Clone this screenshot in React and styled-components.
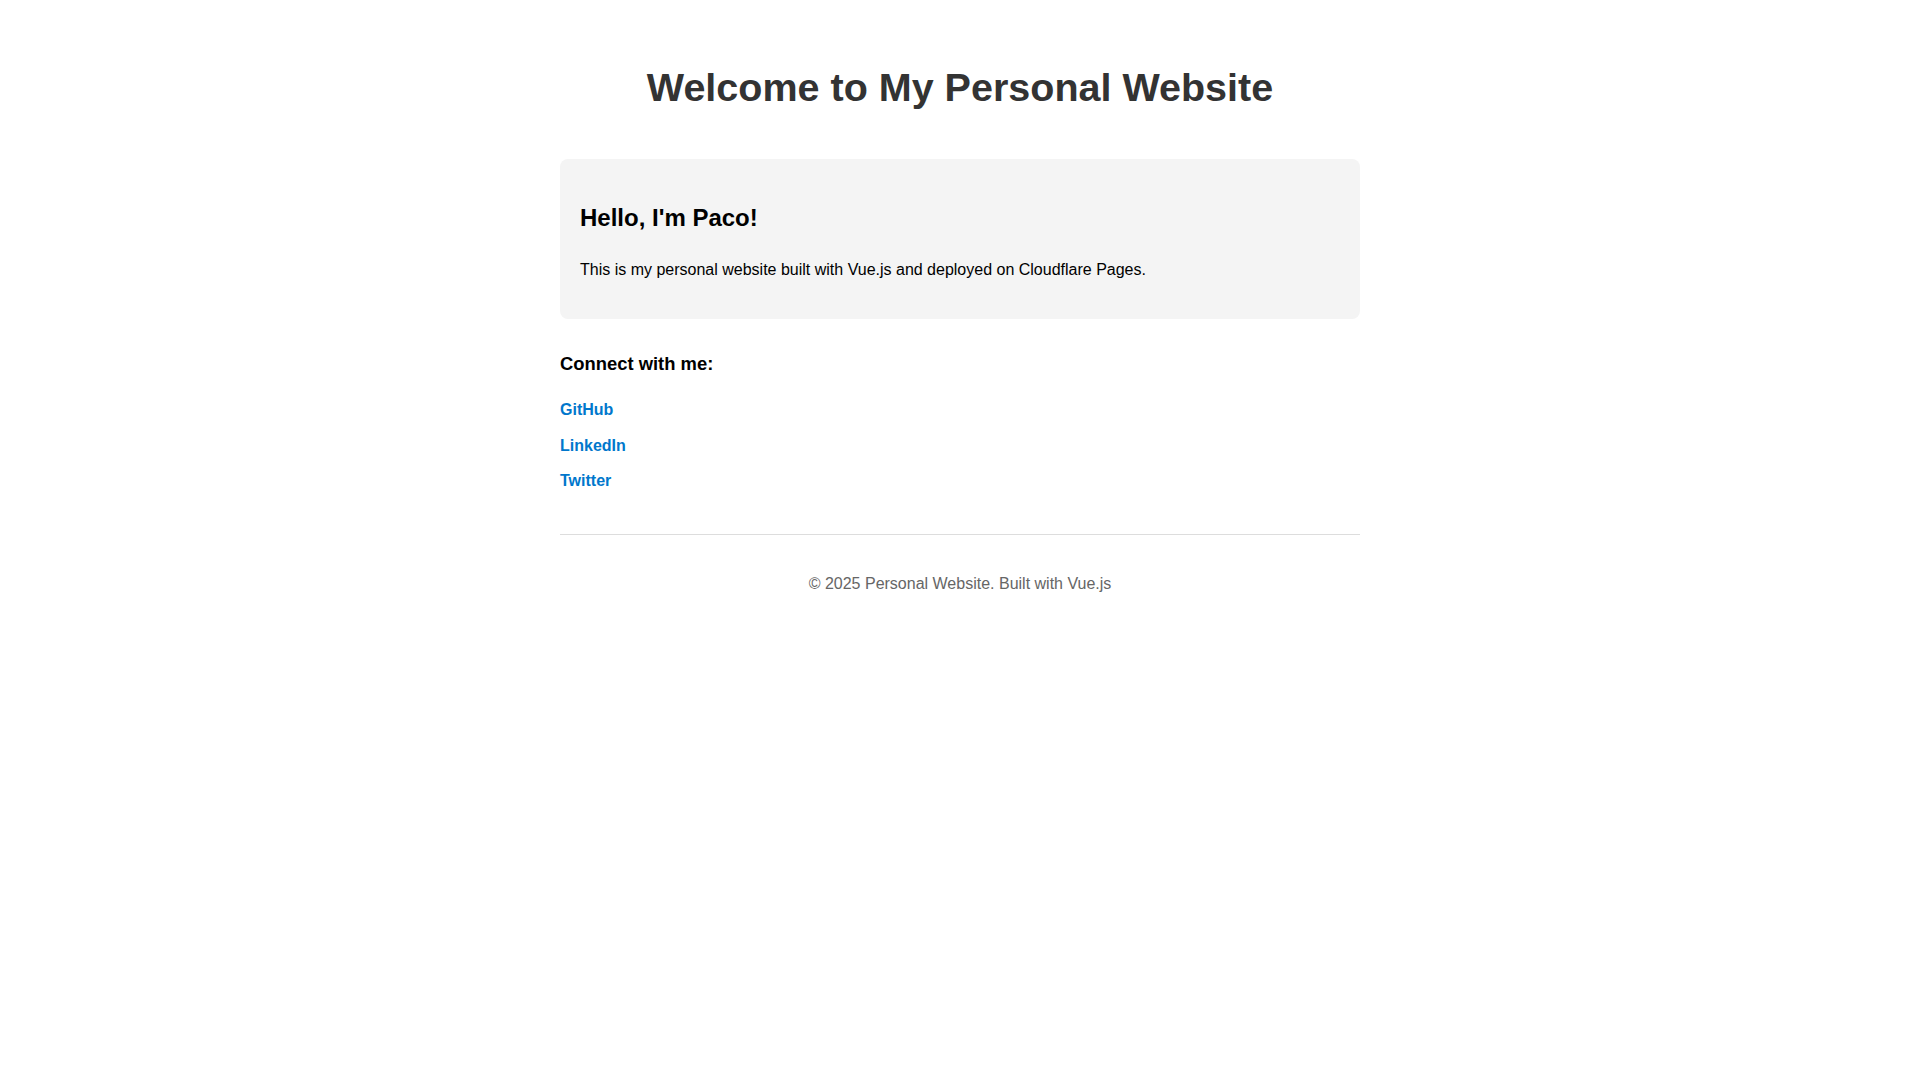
import React from "react";
import styled, { createGlobalStyle } from "styled-components";

const GlobalStyle = createGlobalStyle`
  html, body {
    background: #ffffff;
  }
  body {
    margin: 8px;
    font-family: "Liberation Sans", Arial, Helvetica, sans-serif;
    line-height: 1.6;
    color: #000000;
  }
`;

const Container = styled.div`
  max-width: 800px;
  margin: 0 auto;
  padding: 20px;
  box-sizing: content-box;
`;

const Header = styled.header`
  margin-bottom: 40px;
`;

const Title = styled.h1`
  font-size: 39.5px;
  line-height: 64px;
  font-weight: bold;
  color: #333333;
  text-align: center;
  margin: 26.8px 0;
`;

const Card = styled.section`
  background: #f4f4f4;
  border-radius: 8px;
  padding: 20px;
  margin-bottom: 30px;
`;

const CardTitle = styled.h2`
  font-size: 24px;
  font-weight: bold;
  margin: 19.92px 0;
`;

const Text = styled.p`
  font-size: 16px;
  margin: 16px 0;
`;

const SectionTitle = styled.h3`
  font-size: 18.4px;
  line-height: 29.95px;
  font-weight: bold;
  margin: 18.72px 0;
`;

const LinkList = styled.ul`
  list-style: none;
  padding: 0;
  margin: 16px 0;
`;

const LinkItem = styled.li`
  margin-bottom: 10px;
`;

const SocialLink = styled.a`
  color: #0077cc;
  font-weight: bold;
  text-decoration: none;
  font-size: 16px;
`;

const Footer = styled.footer`
  margin-top: 40px;
  padding-top: 20px;
  border-top: 1px solid #dddddd;
  text-align: center;
  color: #666666;
`;

const FooterText = styled.p`
  margin: 16px 0;
  font-size: 16px;
`;

const links = [
  { name: "GitHub", url: "#" },
  { name: "LinkedIn", url: "#" },
  { name: "Twitter", url: "#" },
];

export default function App() {
  return (
    <>
      <GlobalStyle />
      <Container>
        <Header>
          <Title>Welcome to My Personal Website</Title>
        </Header>
        <main>
          <Card>
            <CardTitle>Hello, I'm Paco!</CardTitle>
            <Text>
              This is my personal website built with Vue.js and deployed on
              Cloudflare Pages.
            </Text>
          </Card>
          <section>
            <SectionTitle>Connect with me:</SectionTitle>
            <LinkList>
              {links.map((l) => (
                <LinkItem key={l.name}>
                  <SocialLink href={l.url}>{l.name}</SocialLink>
                </LinkItem>
              ))}
            </LinkList>
          </section>
        </main>
        <Footer>
          <FooterText>© 2025 Personal Website. Built with Vue.js</FooterText>
        </Footer>
      </Container>
    </>
  );
}
